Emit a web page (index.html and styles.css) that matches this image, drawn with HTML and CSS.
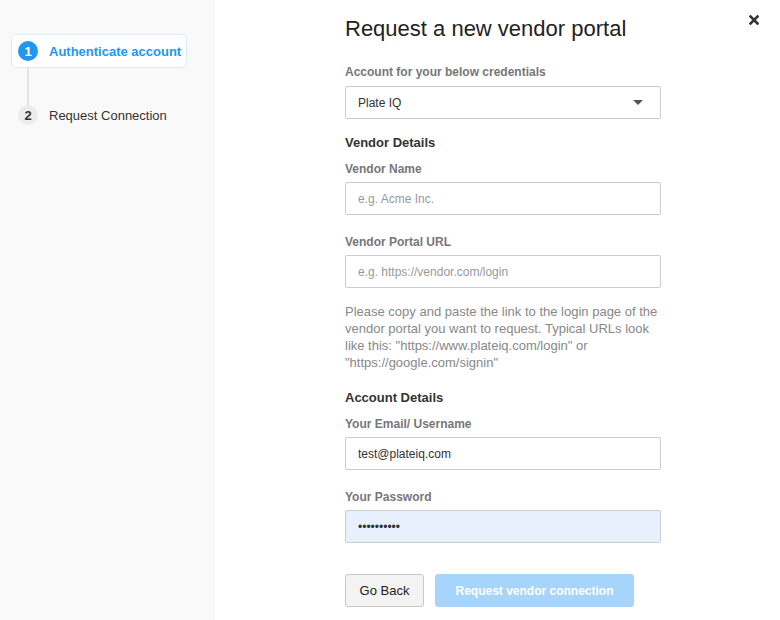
FILE: index.html
```html
<!DOCTYPE html>
<html>
<head>
<meta charset="utf-8">
<link rel="stylesheet" href="styles.css">
</head>
<body>
<div class="page">
  <aside class="sidebar">
    <div class="step step-active">
      <span class="step-num">1</span>
      <span class="step-label">Authenticate account</span>
    </div>
    <div class="step-line"></div>
    <div class="step">
      <span class="step-num">2</span>
      <span class="step-label">Request Connection</span>
    </div>
  </aside>
  <main class="main">
    <h1 class="title">Request a new vendor portal</h1>
    <div class="label first-label">Account for your below credentials</div>
    <div class="select">
      <span>Plate IQ</span>
      <svg class="caret" width="10" height="5" viewBox="0 0 10 5"><path d="M0 0 L10 0 L5 5 Z" fill="#555"/></svg>
    </div>

    <div class="section">Vendor Details</div>
    <div class="label">Vendor Name</div>
    <input class="input" type="text" placeholder="e.g. Acme Inc.">
    <div class="label spaced">Vendor Portal URL</div>
    <input class="input" type="text" placeholder="e.g. https://vendor.com/login">
    <p class="help">Please copy and paste the link to the login page of the vendor portal you want to request. Typical URLs look like this: "https://www.plateiq.com/login" or "https://google.com/signin"</p>

    <div class="section section-2">Account Details</div>
    <div class="label">Your Email/ Username</div>
    <input class="input" type="text" value="test@plateiq.com">
    <div class="label spaced">Your Password</div>
    <input class="input autofill" type="password" value="abcdefghij">

    <div class="actions">
      <button class="btn btn-back">Go Back</button>
      <button class="btn btn-primary">Request vendor connection</button>
    </div>
  </main>
  <button class="close" aria-label="Close">
    <svg width="10" height="10" viewBox="0 0 10 10"><path d="M1.5 1.5 L8.5 8.5 M8.5 1.5 L1.5 8.5" stroke="#333" stroke-width="2.6" stroke-linecap="square"/></svg>
  </button>
</div>
</body>
</html>
```
FILE: styles.css
```css
* { box-sizing: border-box; }
html, body { margin: 0; padding: 0; }
body {
  font-family: "Liberation Sans", Arial, sans-serif;
  color: #333;
  background: #fff;
}
.page {
  position: relative;
  display: flex;
  width: 780px;
  height: 620px;
  overflow: hidden;
}
.sidebar {
  width: 215px;
  flex: none;
  background: #f9f9f9;
  padding: 34px 28px 0 11px;
}
.step {
  display: flex;
  align-items: center;
  height: 34px;
  padding-left: 6px;
  border: 1px solid transparent;
  border-radius: 5px;
}
.step-active {
  background: #fff;
  border-color: #dcecfc;
  width: 176px;
}
.step-num {
  width: 20px;
  height: 20px;
  border-radius: 50%;
  background: #ececec;
  color: #333;
  font-size: 13px;
  font-weight: bold;
  display: flex;
  align-items: center;
  justify-content: center;
  flex: none;
}
.step-active .step-num {
  background: #2196f3;
  color: #fff;
}
.step-label {
  margin-left: 11px;
  font-size: 13px;
  color: #333;
}
.step-active .step-label {
  color: #2196f3;
  font-weight: bold;
}
.step-line {
  width: 2px;
  height: 40px;
  margin: -1px 0 -9px 16px;
  background: #e2e2e2;
}
.main {
  padding-left: 130px;
  width: 446px;
  display: flex;
  flex-direction: column;
}
.title {
  margin: 16px 0 0;
  font-size: 22px;
  font-weight: normal;
  line-height: 26px;
  color: #222;
}
.label {
  font-size: 12px;
  font-weight: bold;
  color: #777;
  line-height: 14px;
  margin-bottom: 6px;
}
.first-label { margin-top: 23px; margin-bottom: 7px; }
.spaced { margin-top: 20px; }
.select {
  height: 33px;
  border: 1px solid #ccc;
  border-radius: 2px;
  display: flex;
  align-items: center;
  justify-content: space-between;
  padding: 0 17px 0 12px;
  font-size: 12px;
  color: #333;
}
.caret { display: block; }
.section {
  margin-top: 16px;
  margin-bottom: 11px;
  font-size: 13px;
  font-weight: bold;
  color: #333;
  line-height: 16px;
}
.section-2 { margin-top: 19px; }
.input {
  display: block;
  width: 100%;
  height: 33px;
  border: 1px solid #ccc;
  border-radius: 2px;
  padding: 0 12px;
  font-family: "Liberation Sans", Arial, sans-serif;
  font-size: 12px;
  color: #333;
  background: #fff;
  outline: none;
}
.input::placeholder { color: #999; }
.autofill {
  background: #e8f0fe;
  font-size: 12px;
}
.help {
  margin: 15px 0 0;
  font-size: 13px;
  line-height: 17px;
  color: #888;
}
.actions {
  display: flex;
  gap: 11px;
  margin-top: 31px;
}
.btn {
  height: 33px;
  border-radius: 3px;
  font-family: "Liberation Sans", Arial, sans-serif;
  font-size: 13px;
  padding: 0;
  cursor: pointer;
}
.btn-back {
  width: 79px;
  background: #f3f3f3;
  border: 1px solid #c8c8c8;
  color: #222;
}
.btn-primary {
  width: 199px;
  background: #a6d4fa;
  border: 1px solid #a6d4fa;
  color: #fff;
  font-weight: bold;
  font-size: 12px;
}
.close {
  position: absolute;
  top: 15px;
  left: 749px;
  width: 10px;
  height: 10px;
  padding: 0;
  border: 0;
  background: none;
  display: flex;
}
```
